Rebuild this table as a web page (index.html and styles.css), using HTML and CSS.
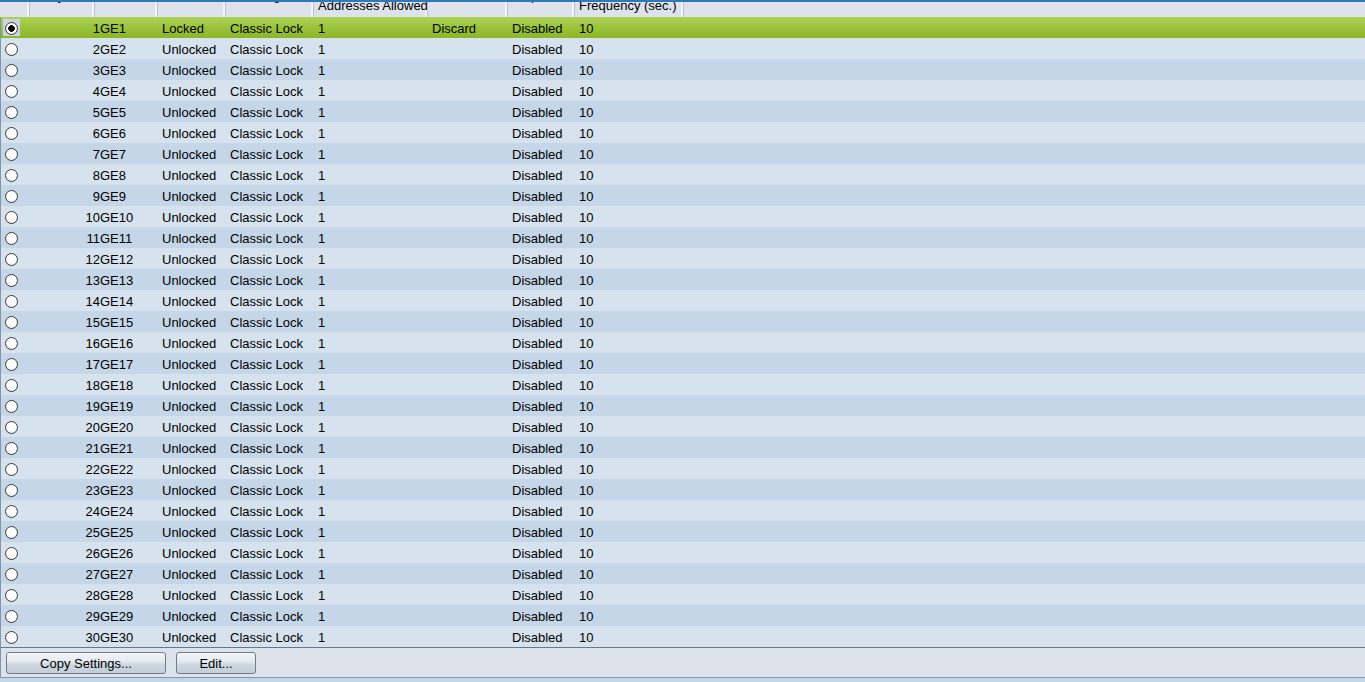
FILE: index.html
```html
<!DOCTYPE html>
<html>
<head>
<meta charset="utf-8">
<link rel="stylesheet" href="styles.css">
</head>
<body>
<div class="page">
  <div class="thead">
    <div class="th"></div>
    <div class="th hi">Entry No.</div>
    <div class="th hi">Interface</div>
    <div class="th hi">Status</div>
    <div class="th hi">Learning Mode</div>
    <div class="th">Max No. of<br>Addresses Allowed</div>
    <div class="th hi">Action</div>
    <div class="th hi">Trap</div>
    <div class="th">Trap<br>Frequency (sec.)</div>
    <div class="th last"></div>
  </div>
  <div class="tbody">
    <div class="row sel"><div class="c r"><span class="focus"><span class="radio on"></span></span></div><div class="c num">1</div><div class="c port">GE1</div><div class="c">Locked</div><div class="c">Classic Lock</div><div class="c">1</div><div class="c">Discard</div><div class="c">Disabled</div><div class="c">10</div></div>
    <div class="row"><div class="c r"><span class="radio"></span></div><div class="c num">2</div><div class="c port">GE2</div><div class="c">Unlocked</div><div class="c">Classic Lock</div><div class="c">1</div><div class="c"></div><div class="c">Disabled</div><div class="c">10</div></div>
    <div class="row alt"><div class="c r"><span class="radio"></span></div><div class="c num">3</div><div class="c port">GE3</div><div class="c">Unlocked</div><div class="c">Classic Lock</div><div class="c">1</div><div class="c"></div><div class="c">Disabled</div><div class="c">10</div></div>
    <div class="row"><div class="c r"><span class="radio"></span></div><div class="c num">4</div><div class="c port">GE4</div><div class="c">Unlocked</div><div class="c">Classic Lock</div><div class="c">1</div><div class="c"></div><div class="c">Disabled</div><div class="c">10</div></div>
    <div class="row alt"><div class="c r"><span class="radio"></span></div><div class="c num">5</div><div class="c port">GE5</div><div class="c">Unlocked</div><div class="c">Classic Lock</div><div class="c">1</div><div class="c"></div><div class="c">Disabled</div><div class="c">10</div></div>
    <div class="row"><div class="c r"><span class="radio"></span></div><div class="c num">6</div><div class="c port">GE6</div><div class="c">Unlocked</div><div class="c">Classic Lock</div><div class="c">1</div><div class="c"></div><div class="c">Disabled</div><div class="c">10</div></div>
    <div class="row alt"><div class="c r"><span class="radio"></span></div><div class="c num">7</div><div class="c port">GE7</div><div class="c">Unlocked</div><div class="c">Classic Lock</div><div class="c">1</div><div class="c"></div><div class="c">Disabled</div><div class="c">10</div></div>
    <div class="row"><div class="c r"><span class="radio"></span></div><div class="c num">8</div><div class="c port">GE8</div><div class="c">Unlocked</div><div class="c">Classic Lock</div><div class="c">1</div><div class="c"></div><div class="c">Disabled</div><div class="c">10</div></div>
    <div class="row alt"><div class="c r"><span class="radio"></span></div><div class="c num">9</div><div class="c port">GE9</div><div class="c">Unlocked</div><div class="c">Classic Lock</div><div class="c">1</div><div class="c"></div><div class="c">Disabled</div><div class="c">10</div></div>
    <div class="row"><div class="c r"><span class="radio"></span></div><div class="c num">10</div><div class="c port">GE10</div><div class="c">Unlocked</div><div class="c">Classic Lock</div><div class="c">1</div><div class="c"></div><div class="c">Disabled</div><div class="c">10</div></div>
    <div class="row alt"><div class="c r"><span class="radio"></span></div><div class="c num">11</div><div class="c port">GE11</div><div class="c">Unlocked</div><div class="c">Classic Lock</div><div class="c">1</div><div class="c"></div><div class="c">Disabled</div><div class="c">10</div></div>
    <div class="row"><div class="c r"><span class="radio"></span></div><div class="c num">12</div><div class="c port">GE12</div><div class="c">Unlocked</div><div class="c">Classic Lock</div><div class="c">1</div><div class="c"></div><div class="c">Disabled</div><div class="c">10</div></div>
    <div class="row alt"><div class="c r"><span class="radio"></span></div><div class="c num">13</div><div class="c port">GE13</div><div class="c">Unlocked</div><div class="c">Classic Lock</div><div class="c">1</div><div class="c"></div><div class="c">Disabled</div><div class="c">10</div></div>
    <div class="row"><div class="c r"><span class="radio"></span></div><div class="c num">14</div><div class="c port">GE14</div><div class="c">Unlocked</div><div class="c">Classic Lock</div><div class="c">1</div><div class="c"></div><div class="c">Disabled</div><div class="c">10</div></div>
    <div class="row alt"><div class="c r"><span class="radio"></span></div><div class="c num">15</div><div class="c port">GE15</div><div class="c">Unlocked</div><div class="c">Classic Lock</div><div class="c">1</div><div class="c"></div><div class="c">Disabled</div><div class="c">10</div></div>
    <div class="row"><div class="c r"><span class="radio"></span></div><div class="c num">16</div><div class="c port">GE16</div><div class="c">Unlocked</div><div class="c">Classic Lock</div><div class="c">1</div><div class="c"></div><div class="c">Disabled</div><div class="c">10</div></div>
    <div class="row alt"><div class="c r"><span class="radio"></span></div><div class="c num">17</div><div class="c port">GE17</div><div class="c">Unlocked</div><div class="c">Classic Lock</div><div class="c">1</div><div class="c"></div><div class="c">Disabled</div><div class="c">10</div></div>
    <div class="row"><div class="c r"><span class="radio"></span></div><div class="c num">18</div><div class="c port">GE18</div><div class="c">Unlocked</div><div class="c">Classic Lock</div><div class="c">1</div><div class="c"></div><div class="c">Disabled</div><div class="c">10</div></div>
    <div class="row alt"><div class="c r"><span class="radio"></span></div><div class="c num">19</div><div class="c port">GE19</div><div class="c">Unlocked</div><div class="c">Classic Lock</div><div class="c">1</div><div class="c"></div><div class="c">Disabled</div><div class="c">10</div></div>
    <div class="row"><div class="c r"><span class="radio"></span></div><div class="c num">20</div><div class="c port">GE20</div><div class="c">Unlocked</div><div class="c">Classic Lock</div><div class="c">1</div><div class="c"></div><div class="c">Disabled</div><div class="c">10</div></div>
    <div class="row alt"><div class="c r"><span class="radio"></span></div><div class="c num">21</div><div class="c port">GE21</div><div class="c">Unlocked</div><div class="c">Classic Lock</div><div class="c">1</div><div class="c"></div><div class="c">Disabled</div><div class="c">10</div></div>
    <div class="row"><div class="c r"><span class="radio"></span></div><div class="c num">22</div><div class="c port">GE22</div><div class="c">Unlocked</div><div class="c">Classic Lock</div><div class="c">1</div><div class="c"></div><div class="c">Disabled</div><div class="c">10</div></div>
    <div class="row alt"><div class="c r"><span class="radio"></span></div><div class="c num">23</div><div class="c port">GE23</div><div class="c">Unlocked</div><div class="c">Classic Lock</div><div class="c">1</div><div class="c"></div><div class="c">Disabled</div><div class="c">10</div></div>
    <div class="row"><div class="c r"><span class="radio"></span></div><div class="c num">24</div><div class="c port">GE24</div><div class="c">Unlocked</div><div class="c">Classic Lock</div><div class="c">1</div><div class="c"></div><div class="c">Disabled</div><div class="c">10</div></div>
    <div class="row alt"><div class="c r"><span class="radio"></span></div><div class="c num">25</div><div class="c port">GE25</div><div class="c">Unlocked</div><div class="c">Classic Lock</div><div class="c">1</div><div class="c"></div><div class="c">Disabled</div><div class="c">10</div></div>
    <div class="row"><div class="c r"><span class="radio"></span></div><div class="c num">26</div><div class="c port">GE26</div><div class="c">Unlocked</div><div class="c">Classic Lock</div><div class="c">1</div><div class="c"></div><div class="c">Disabled</div><div class="c">10</div></div>
    <div class="row alt"><div class="c r"><span class="radio"></span></div><div class="c num">27</div><div class="c port">GE27</div><div class="c">Unlocked</div><div class="c">Classic Lock</div><div class="c">1</div><div class="c"></div><div class="c">Disabled</div><div class="c">10</div></div>
    <div class="row"><div class="c r"><span class="radio"></span></div><div class="c num">28</div><div class="c port">GE28</div><div class="c">Unlocked</div><div class="c">Classic Lock</div><div class="c">1</div><div class="c"></div><div class="c">Disabled</div><div class="c">10</div></div>
    <div class="row alt"><div class="c r"><span class="radio"></span></div><div class="c num">29</div><div class="c port">GE29</div><div class="c">Unlocked</div><div class="c">Classic Lock</div><div class="c">1</div><div class="c"></div><div class="c">Disabled</div><div class="c">10</div></div>
    <div class="row"><div class="c r"><span class="radio"></span></div><div class="c num">30</div><div class="c port">GE30</div><div class="c">Unlocked</div><div class="c">Classic Lock</div><div class="c">1</div><div class="c"></div><div class="c">Disabled</div><div class="c">10</div></div>
  </div>
  <div class="bar">
    <button class="btn wide">Copy Settings...</button>
    <button class="btn">Edit...</button>
  </div>
  <div class="foot"></div>
</div>
</body>
</html>
```

FILE: styles.css
```css
html, body {
  margin: 0;
  padding: 0;
  background: #c5d6e6;
}
body {
  font-family: "Liberation Sans", Arial, sans-serif;
  font-size: 13px;
  color: #000;
  width: 1365px;
  height: 682px;
  overflow: hidden;
}
.page {
  width: 1365px;
}
.thead {
  display: grid;
  grid-template-columns: 30px 65px 63px 68px 88px 114px 80px 67px 109px 1fr;
  border-top: 2px solid #2e79b9;
  background: #dce3eb;
  height: 15px;
}
.th {
  height: 15px;
  overflow: hidden;
  display: flex;
  flex-direction: column;
  justify-content: flex-end;
  padding: 0 0 4px 4px;
  box-sizing: border-box;
  line-height: 15px;
  white-space: nowrap;
  border-right: 1px solid #b6c2ce;
  box-shadow: inset -2px 0 0 #f4f7fa;
}
.th.hi {
  padding-bottom: 14px;
}
.th.last {
  border-right: none;
  box-shadow: none;
}
.tbody {
  border-left: 1px solid #8595a5;
}
.row {
  display: grid;
  grid-template-columns: 29px 70px 58px 68px 88px 114px 80px 67px 1fr;
  height: 21px;
  box-sizing: border-box;
  padding-top: 2px;
  line-height: 19px;
  background: #d6e2ed;
}
.row.alt {
  background: #c4d6e7;
}
.row.sel {
  background: linear-gradient(#add157, #8bb624);
}
.c {
  padding-left: 4px;
  white-space: nowrap;
}
.c.r {
  padding-left: 0;
  display: flex;
  align-items: flex-start;
  justify-content: flex-start;
}
.c.num {
  text-align: right;
  padding-left: 0;
}
.c.port {
  padding-left: 0;
}
.radio {
  display: inline-block;
  width: 11px;
  height: 11px;
  border: 1px solid #3d3d3d;
  border-radius: 50%;
  background: radial-gradient(circle at 50% 40%, #ffffff 45%, #e3e3e3 100%);
  margin-left: 4px;
  margin-top: 3px;
}
.focus {
  display: flex;
  align-items: center;
  justify-content: center;
  width: 17px;
  height: 17px;
  margin-left: 2px;
  background: #c9d5e2;
}
.focus .radio {
  margin-left: 0;
  margin-top: 1px;
}
.radio.on {
  background: radial-gradient(circle, #000 0, #000 3px, #fff 3.6px, #fff 55%, #e3e3e3 100%);
}
.bar {
  display: flex;
  gap: 10px;
  align-items: center;
  height: 29px;
  padding: 0 0 0 5px;
  background: #dce3ea;
  border-top: 1px solid #66788a;
  border-bottom: 1px solid #8596a6;
  border-left: 1px solid #8595a5;
}
.btn {
  font-family: "Liberation Sans", Arial, sans-serif;
  font-size: 13px;
  color: #000;
  height: 22px;
  width: 80px;
  padding: 0;
  border: 1px solid #6f7d8a;
  border-radius: 3px;
  background: linear-gradient(#f4f6f9 0%, #e4e9ef 45%, #cfd8e1 55%, #c3ced9 100%);
  margin-top: 1px;
}
.btn.wide {
  width: 160px;
}
.foot {
  height: 4px;
  background: #c5d6e6;
}
```
